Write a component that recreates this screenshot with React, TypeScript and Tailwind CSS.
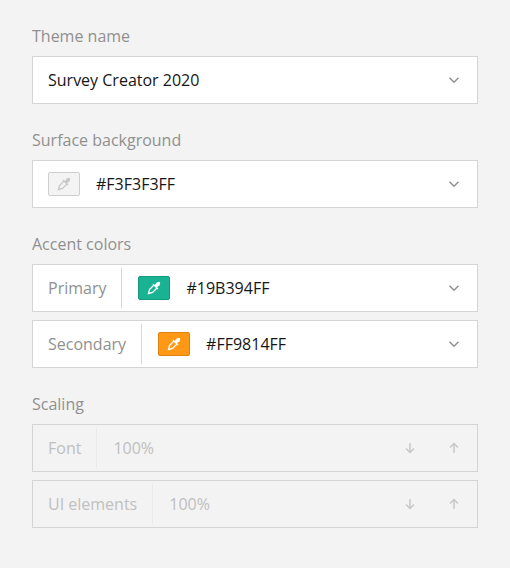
import type { ReactNode } from "react";

const FONT = "font-['Open_Sans',sans-serif]";

function Chevron() {
  return (
    <svg width="16" height="16" viewBox="0 0 16 16" className="mr-[15px] shrink-0" fill="none" stroke="#909090" strokeWidth="1.5">
      <path d="M3.5 5.8 8 10.3l4.5-4.5" />
    </svg>
  );
}

function Arrow({ up = false }: { up?: boolean }) {
  return (
    <svg width="16" height="16" viewBox="0 0 16 16" className={up ? "" : "rotate-180"} fill="none" stroke="#c8c8c8" strokeWidth="1.5">
      <path d="M8 13V4M4 7.5l4-4 4 4" />
    </svg>
  );
}

function Swatch({ className, stroke }: { className: string; stroke: string }) {
  return (
    <span className={`flex h-6 w-8 shrink-0 items-center justify-center rounded-[2px] border ${className}`}>
      <svg width="16" height="16" viewBox="0 0 16 16" fill="none" stroke={stroke} strokeWidth="1.3">
        <path d="M8 5 3.5 9.5 2.5 13.5l4-1L11 8" />
        <path d="M7 4l5 5M9 6l2-3 2-.5.5.5-.5 2-3 2z" fill={stroke} />
      </svg>
    </span>
  );
}

function Field({ prefix, children }: { prefix?: string; children: ReactNode }) {
  return (
    <div className="flex h-12 items-center border border-[#d4d4d4] bg-white pl-[15px]">
      {prefix && <span className="mr-4 flex h-10 items-center border-r border-[#d6d6d6] pr-[15px] text-[#909090]">{prefix}</span>}
      {children}
    </div>
  );
}

function Spin({ label }: { label: string }) {
  return (
    <div className="flex h-12 items-center border border-[#d4d4d4] pl-[15px] text-[#c0c0c0]">
      <span className="mr-4 flex h-10 items-center border-r border-[#eaeaea] pr-[15px]">{label}</span>
      <span className="flex-1">100%</span>
      <span className="mr-[15px] flex gap-7"><Arrow /><Arrow up /></span>
    </div>
  );
}

export default function App() {
  return (
    <div className={`flex h-[568px] w-[510px] flex-col gap-6 bg-[#f3f3f3] px-8 pt-6 text-base leading-6 text-[#161616] ${FONT}`}>
      <section>
        <h3 className="mb-2 text-[#909090]">Theme name</h3>
        <Field><span className="flex-1">Survey Creator 2020</span><Chevron /></Field>
      </section>
      <section>
        <h3 className="mb-2 text-[#909090]">Surface background</h3>
        <Field><Swatch className="mr-4 border-[#cfcfcf] bg-[#f3f3f3]" stroke="#c8c8c8" /><span className="flex-1">#F3F3F3FF</span><Chevron /></Field>
      </section>
      <section>
        <h3 className="mb-2 text-[#909090]">Accent colors</h3>
        <div className="flex flex-col gap-2">
          <Field prefix="Primary"><Swatch className="mr-4 border-[#159a7e] bg-[#19b394]" stroke="#fff" /><span className="flex-1">#19B394FF</span><Chevron /></Field>
          <Field prefix="Secondary"><Swatch className="mr-4 border-[#db8211] bg-[#ff9814]" stroke="#fff" /><span className="flex-1">#FF9814FF</span><Chevron /></Field>
        </div>
      </section>
      <section>
        <h3 className="mb-2 text-[#909090]">Scaling</h3>
        <div className="flex flex-col gap-2"><Spin label="Font" /><Spin label="UI elements" /></div>
      </section>
    </div>
  );
}
